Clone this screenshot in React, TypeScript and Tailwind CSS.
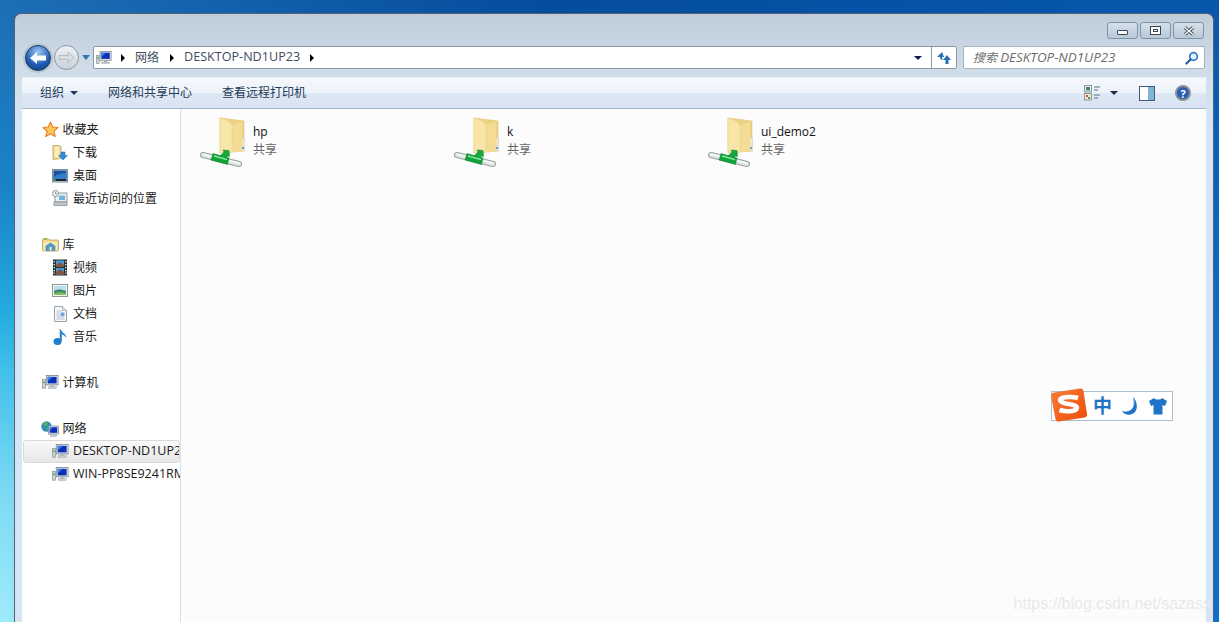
import React from 'react';

const Monitor = ({ size = 18 }: { size?: number }) => (
  <svg width={size} height={size} viewBox="0 0 18 16">
    <rect x="0.5" y="5" width="3" height="9" fill="#cfd6d6" stroke="#7d8a8a" strokeWidth="0.7" />
    <rect x="1" y="7" width="2" height="1.5" fill="#3fae4a" />
    <rect x="4.5" y="0.5" width="12.5" height="10" fill="#e6ebee" stroke="#6f7d8a" strokeWidth="0.8" />
    <rect x="6" y="2" width="9.5" height="7" fill="#0b2fb5" />
    <path d="M6 2h5.5l-5.500 5z" fill="#3a7fe6" />
    <rect x="9" y="11" width="3.500" height="1.500" fill="#a5acb0" />
    <rect x="6.500" y="12.500" width="8.500" height="1.800" fill="#c9cfd2" stroke="#8c969b" strokeWidth="0.4" />
  </svg>
);

const Star = () => (
  <svg width="17" height="17" viewBox="0 0 17 17">
    <path d="M8.500 1l2.200 5 5.300.5-4 3.600 1.200 5.400-4.700-2.800-4.700 2.800 1.200-5.400-4-3.600 5.300-.5z" fill="#fcc75a" stroke="#ea7d25" strokeWidth="1.100" strokeLinejoin="round" />
  </svg>
);

const Downloads = () => (
  <svg width="16" height="17" viewBox="0 0 16 17">
    <path d="M1 1.500h5l3 1v12l-8 1z" fill="#f3dd97" stroke="#b9a260" strokeWidth="0.8" />
    <path d="M3 3h4v10H3z" fill="#fbeebc" />
    <path d="M9 8h4v3.500h2.500L11 16l-4.500-4.500H9z" fill="#2f8fdc" stroke="#1c66ad" strokeWidth="0.5" />
  </svg>
);

const Desktop = () => (
  <svg width="16" height="14" viewBox="0 0 16 14">
    <rect x="0.500" y="0.500" width="15" height="12.500" fill="#c9d5e3" stroke="#7b8da3" />
    <rect x="1.500" y="1.500" width="13" height="8.500" fill="#1b4f9c" />
    <path d="M1.500 8c4-3 8-4 13-4v6h-13z" fill="#2f7ec6" />
    <rect x="1.500" y="10" width="13" height="2" fill="#22262c" />
    <rect x="2" y="10.400" width="2" height="1.200" fill="#58b24c" />
  </svg>
);

const Recent = () => (
  <svg width="16" height="17" viewBox="0 0 16 17">
    <rect x="3" y="3" width="12" height="9" fill="#eef1f3" stroke="#8f9aa1" />
    <rect x="7" y="5.500" width="6" height="4.500" fill="#6fb3df" />
    <circle cx="3.500" cy="3.500" r="3" fill="#f3f4f5" stroke="#8b9499" />
    <path d="M3.500 1.800v1.900h1.500" stroke="#596268" strokeWidth="0.7" fill="none" />
    <rect x="2" y="12" width="13" height="3.500" fill="#bfc6ca" stroke="#80898e" strokeWidth="0.7" />
  </svg>
);

const Library = () => (
  <svg width="17" height="15" viewBox="0 0 17 15">
    <path d="M0.500 2.500a1 1 0 011-1h4l1.500 1.500h8.500a1 1 0 011 1v9a1 1 0 01-1 1h-14a1 1 0 01-1-1z" fill="#f2d98e" stroke="#b79d5d" strokeWidth="0.8" />
    <rect x="2" y="2" width="3" height="1" fill="#6cc04a" />
    <path d="M1.500 5h14v8.500h-14z" fill="#f8e8b2" />
    <path d="M4 9l4.500-3L13 9v4.500H4z" fill="#4f9cc9" stroke="#2f719d" strokeWidth="0.5" />
    <rect x="7.500" y="10" width="2" height="3.500" fill="#f8e8b2" />
  </svg>
);

const Video = () => (
  <svg width="14" height="17" viewBox="0 0 14 17">
    <rect width="14" height="16" y="0.500" fill="#24312f" />
    {[2, 5, 8, 11, 13.500].map((y) => (
      <g key={y}>
        <rect x="0.600" y={y} width="1.400" height="1.400" fill="#cfe3e3" />
        <rect x="12" y={y} width="1.400" height="1.400" fill="#cfe3e3" />
      </g>
    ))}
    <rect x="3" y="1.500" width="8" height="6.500" fill="#3f9de0" />
    <rect x="3" y="9" width="8" height="6.500" fill="#3f9de0" />
    <path d="M3 6l4-3 4 3v2H3zM3 13l4-3 4 3v2.500H3z" fill="#87563f" />
  </svg>
);

const Picture = () => (
  <svg width="16" height="13" viewBox="0 0 16 13">
    <rect x="0.500" y="0.500" width="15" height="12" fill="#f4f5f5" stroke="#8e9497" />
    <rect x="2" y="2" width="12" height="9" fill="#b9dff0" />
    <path d="M2 7c3-2 7-2 12 0v4H2z" fill="#3f8a6a" />
    <path d="M2 9c4-1 8-1 12 0v2H2z" fill="#7dbb5c" />
  </svg>
);

const Doc = () => (
  <svg width="13" height="16" viewBox="0 0 13 16">
    <path d="M0.500 0.500h8l4 4v11h-12z" fill="#f7f8fa" stroke="#9aa0a6" />
    <path d="M8.500 0.500v4h4" fill="#dfe4e8" stroke="#9aa0a6" strokeWidth="0.7" />
    <path d="M2.500 5h5M2.500 7h3M2.500 9h3M2.500 11h8M2.500 13h8" stroke="#9fb0c4" strokeWidth="0.8" />
    <rect x="6.500" y="6.500" width="4" height="3.500" fill="#6fa6d6" />
  </svg>
);

const Music = () => (
  <svg width="14" height="18" viewBox="0 0 14 18">
    <ellipse cx="4.500" cy="13.500" rx="4" ry="3.500" fill="#1f7fd0" />
    <path d="M7 13V1c1 3 5 4 6 8-1.500-2-3-2.500-4.500-3V13z" fill="#2a8fdc" stroke="#1d6cb0" strokeWidth="0.5" />
  </svg>
);

const Globe = () => (
  <svg width="18" height="16" viewBox="0 0 18 16">
    <circle cx="5.500" cy="5.500" r="5.200" fill="#2f8fb8" />
    <path d="M2 2.500c2-1.500 4-1.500 5-.5l-1 2.500-3 .5zM6 6l3 .5-1.500 3.500-1.500-1z" fill="#56b548" />
    <rect x="7.500" y="5" width="10" height="8" fill="#e6ebee" stroke="#6f7d8a" strokeWidth="0.7" />
    <rect x="8.700" y="6.200" width="7.600" height="5.600" fill="#0b2fb5" />
    <path d="M8.700 6.200h4l-4 3.500z" fill="#3a7fe6" />
    <rect x="9.500" y="13.500" width="6" height="2" fill="#c9cfd2" stroke="#8c969b" strokeWidth="0.4" />
  </svg>
);

// folder with the green share pipe, origin at about (199,115)
const ShareFolder = () => (
  <svg width="46" height="52" viewBox="0 0 46 52">
    <path d="M21 2l24 3v30l-24 2z" fill="#edd283" stroke="#dcc278" strokeWidth="0.6" />
    <path d="M43 22h2.500v13H43z" fill="#f5ecc9" stroke="#c9c7b4" strokeWidth="0.5" />
    <rect x="43.300" y="31" width="1.600" height="2" fill="#3f8fd0" />
    <path d="M33 9l10-3v29l-10 1z" fill="#f3dc94" />
    <path d="M21 2c5 1 10 4 12 7v27l-7 4-5-5z" fill="#f8e6a8" stroke="#e6cc80" strokeWidth="0.5" />
    <path d="M4 39l36 9" stroke="#98a39e" strokeWidth="6" strokeLinecap="round" />
    <path d="M4 39l36 9" stroke="#dde5e1" strokeWidth="4" strokeLinecap="round" />
    <path d="M4 38.300l36 9" stroke="#f7faf8" strokeWidth="1.500" strokeLinecap="round" />
    <path d="M14 37.500l16 4.500-1.500 6.500-16.500-4.500z" fill="#12a23a" stroke="#0c7a2b" strokeWidth="0.5" />
    <path d="M21 40l4-4-1-2 6 0.500 0.500 6-2-.5-2.500 3z" fill="#14a83d" stroke="#0c7a2b" strokeWidth="0.5" />
    <path d="M15 40l13 3.500" stroke="#7fe89a" strokeWidth="1.800" />
  </svg>
);

const SogouLogo = () => (
  <svg width="38" height="36" viewBox="0 0 38 36">
    <defs>
      <linearGradient id="sg" x1="0" y1="0" x2="1" y2="1">
        <stop offset="0" stopColor="#f5803a" />
        <stop offset="1" stopColor="#ef4a08" />
      </linearGradient>
    </defs>
    <path d="M4 5.500L30 1.500c2-.3 3 .5 3.500 2.500L37 27c.3 2-.5 3-2.500 3.500L9 34.500c-2 .3-3-.5-3.500-2.500L1 9c-.3-2 1-3.200 3-3.500z" fill="url(#sg)" />
    <path d="M28 11c-5-1.500-15-1.500-17.500 1-2 2 2 4 8 5s9.500 2 8 5c-2 2.500-11 3-17 1" fill="none" stroke="#fff" strokeWidth="4.500" />
  </svg>
);

const NavRow = ({ icon, label, indent = false, selected = false, latin = false }: { icon: React.ReactNode; label: string; indent?: boolean; selected?: boolean; latin?: boolean }) => (
  <div className={`flex items-center whitespace-nowrap overflow-hidden ${selected ? 'h-[23px] ml-px box-border border border-[#d9d9d9] rounded-[3px] bg-gradient-to-b from-[#fafafa] to-[#e6e6e6]' : 'h-[23px]'}`}>
    <div className={`flex items-center justify-center w-[20px] shrink-0 ${selected ? 'ml-[26px]' : indent ? 'ml-[28px]' : 'ml-[18px]'}`}>{icon}</div>
    <span className={`${indent ? 'ml-[3px]' : 'ml-[2.500px]'} ${latin ? 'text-[12.5px]' : 'text-[12px]'} text-[#1a1a1a]`}>{label}</span>
  </div>
);

const FileItem = ({ name }: { name: string }) => (
  <div className="w-[254px] flex items-start pl-[18px]">
    <ShareFolder />
    <div className="ml-[8px] pt-[7px]">
      <div className="text-[12px] leading-[18px] text-[#111]">{name}</div>
      <div className="text-[12px] leading-[18px] text-[#666]">共享</div>
    </div>
  </div>
);

const captionBtn = 'w-[31px] h-[17px] rounded-[3px] border border-[#7f93a8] bg-gradient-to-b from-[#d5e1ec] to-[#b8c8d8] flex items-center justify-center';

export default function App() {
  return (
    <div
      className="w-[1219px] h-[622px] overflow-hidden bg-[linear-gradient(to_bottom,rgba(0,30,90,0.3),transparent_60%),linear-gradient(to_right,transparent_0%,#0660bb_45%,#0a70d0_100%),linear-gradient(to_bottom,#2a90dc_0%,#1f95dc_30%,#26b4e6_50%,#7fdcf5_80%,#a0ecfb_100%)] pt-[13px] pl-[14px]"
      style={{ fontFamily: '"Open Sans", "Noto Sans CJK SC", sans-serif' }}
    >
      <div className="w-[1200px] h-[609px] rounded-t-[7px] border border-b-0 border-[#55616e] bg-[linear-gradient(to_bottom,#bfcddb_0px,#d3e0ec_70px,#d6e5f3_110px,#d6e5f3_100%)] flex flex-col">
        <div className="h-[28px] flex justify-end items-start pt-[8px] pr-[9px] gap-[2px] shrink-0">
          <div className={captionBtn}>
            <div className="w-[11px] h-[5px] mt-[4px] border border-[#3c4652] bg-white rounded-[1px]" />
          </div>
          <div className={captionBtn}>
            <div className="w-[11px] h-[9px] border border-[#3c4652] bg-white flex items-center justify-center">
              <div className="w-[5px] h-[3px] border border-[#3c4652]" />
            </div>
          </div>
          <div className={captionBtn}>
            <svg width="12" height="10" viewBox="0 0 12 10">
              <path d="M2 1.500l8 7M10 1.500l-8 7" stroke="#3c4652" strokeWidth="3" />
              <path d="M2 1.500l8 7M10 1.500l-8 7" stroke="#fff" strokeWidth="1.400" />
            </svg>
          </div>
        </div>

        <div className="h-[31px] flex items-center pl-[10px] shrink-0">
          <div className="w-[68px] h-[27px] flex items-center">
            <div className="w-[26px] h-[26px] rounded-full border border-[#16355c] shadow-[0_0_0_2px_#b9c5d0] bg-[radial-gradient(circle_at_50%_25%,#9cc6f2,#1f5bb0_60%,#0d3a80)] flex items-center justify-center">
              <svg width="18" height="14" viewBox="0 0 18 14">
                <path d="M1 7l7-6v3.500h9v5H8V13z" fill="#fff" />
              </svg>
            </div>
            <div className="w-[25px] h-[25px] rounded-full border border-[#8d9aa6] bg-gradient-to-b from-[#eef2f5] to-[#c9d2da] flex items-center justify-center ml-[3px]">
              <svg width="17" height="13" viewBox="0 0 17 13">
                <path d="M16 6.500L10 1v3.500H1v4h9V12z" fill="#d7dee4" stroke="#a4afb8" strokeWidth="0.7" />
              </svg>
            </div>
            <div className="ml-[3px] w-0 h-0 border-x-[4px] border-x-transparent border-t-[5px] border-t-[#2f76b5]" />
          </div>
          <div className="w-[864px] h-[23px] rounded-[2px] border border-[#8a97a5] bg-white flex items-center text-[12px] text-[#3d4c5c]">
            <div className="ml-[2px]"><Monitor size={16} /></div>
            <div className="ml-[9px] w-0 h-0 border-y-[4px] border-y-transparent border-l-[4px] border-l-black" />
            <span className="ml-[10px]">网络</span>
            <div className="ml-[11px] w-0 h-0 border-y-[4px] border-y-transparent border-l-[4px] border-l-black" />
            <span className="ml-[10px] text-[12.6px]">DESKTOP-ND1UP23</span>
            <div className="ml-[10px] w-0 h-0 border-y-[4px] border-y-transparent border-l-[4px] border-l-black" />
            <div className="ml-auto mr-[9px] w-0 h-0 border-x-[4px] border-x-transparent border-t-[4px] border-t-[#0c1a4a]" />
            <div className="w-[25px] h-full border-l border-[#8a97a5] flex items-center justify-center">
              <svg width="16" height="14" viewBox="0 0 16 14">
                <path d="M6 1L1 6h3c0 2 1 3 3 3l-1-2V6h2z" fill="#2a6db5" />
                <path d="M11 4l-4 5h2.500v4h3V9H15z" fill="#2a6db5" />
              </svg>
            </div>
          </div>
          <div className="ml-[6px] w-[242px] h-[23px] rounded-[2px] border border-[#a5b2bf] bg-white flex items-center pl-[9px] pr-[5px] text-[12px] italic text-[#6d6d6d]">
            <span>搜索 <span className="text-[13.4px]">DESKTOP-ND1UP23</span></span>
            <svg className="ml-auto" width="14" height="14" viewBox="0 0 14 14">
              <circle cx="8.500" cy="5.500" r="3.800" fill="#e6f2fb" stroke="#2f7cc4" strokeWidth="1.700" />
              <path d="M5.500 8.500L1.500 12.500" stroke="#1d5aa0" strokeWidth="2.200" strokeLinecap="round" />
            </svg>
          </div>
        </div>

        <div className="flex-1 mx-[7px] mt-[4px] flex flex-col min-h-0 border-t border-[#e8eff7]">
          <div className="h-[31px] shrink-0 border-b border-[#a3b6cc] bg-[linear-gradient(to_bottom,#f6f9fd_0%,#ecf2f9_50%,#dde7f4_52%,#d9e4f2_100%)] flex items-center text-[12px] text-[#1e3959]">
            <span className="ml-[18px]">组织</span>
            <div className="ml-[6px] w-0 h-0 border-x-[4px] border-x-transparent border-t-[4px] border-t-[#1e3959]" />
            <span className="ml-[30px]">网络和共享中心</span>
            <span className="ml-[30px]">查看远程打印机</span>
            <div className="ml-auto flex items-center">
              <svg width="17" height="16" viewBox="0 0 17 16">
                <rect x="0.500" y="0.500" width="7" height="6.500" fill="#eaf2e8" stroke="#8b98a8" />
                <rect x="2" y="2" width="4" height="3.500" fill="#3f8a6a" />
                <rect x="0.500" y="8.500" width="7" height="6.500" fill="#f3e6c8" stroke="#8b98a8" />
                <rect x="2" y="10" width="2" height="2" fill="#d6503a" />
                <rect x="4" y="12" width="2" height="2" fill="#3f9a4a" />
                <path d="M10 2h6M10 5h4M10 10h6M10 13h4" stroke="#5a6f88" />
              </svg>
              <div className="ml-[9px] w-0 h-0 border-x-[4px] border-x-transparent border-t-[4px] border-t-[#16294a]" />
              <div className="ml-[21px] w-[16px] h-[15px] border border-[#3e5c7e] bg-white flex justify-end">
                <div className="w-[6px] h-full bg-[#7fb5d6]" />
              </div>
              <div className="ml-[20px] mr-[15px] w-[16px] h-[16px] rounded-full border-2 border-[#8b8f96] bg-[#2a5cb0] flex items-center justify-center text-[11px] leading-none font-bold text-white">?</div>
            </div>
          </div>

          <div className="flex-1 flex min-h-0 bg-[#fcfcfc]">
            <div className="w-[159px] shrink-0 border-r border-[#d5e3f1] pt-[9px] bg-white overflow-hidden">
              <NavRow icon={<Star />} label="收藏夹" />
              <NavRow indent icon={<Downloads />} label="下载" />
              <NavRow indent icon={<Desktop />} label="桌面" />
              <NavRow indent icon={<Recent />} label="最近访问的位置" />
              <div className="h-[23px]" />
              <NavRow icon={<Library />} label="库" />
              <NavRow indent icon={<Video />} label="视频" />
              <NavRow indent icon={<Picture />} label="图片" />
              <NavRow indent icon={<Doc />} label="文档" />
              <NavRow indent icon={<Music />} label="音乐" />
              <div className="h-[23px]" />
              <NavRow icon={<Monitor size={17} />} label="计算机" />
              <div className="h-[23px]" />
              <NavRow icon={<Globe />} label="网络" />
              <NavRow indent selected latin icon={<Monitor size={17} />} label="DESKTOP-ND1UP23" />
              <NavRow indent latin icon={<Monitor size={17} />} label="WIN-PP8SE9241RM" />
            </div>
            <div className="flex-1 relative pt-[7px] flex items-start">
              <FileItem name="hp" />
              <FileItem name="k" />
              <FileItem name="ui_demo2" />
              <div className="absolute left-[870px] top-[282px] w-[122px] h-[30px] border border-[#aebfd2] bg-white flex items-center pl-[41px] gap-[8px]">
                <span className="text-[19px] leading-none font-bold text-[#1f74c8]">中</span>
                <svg width="20" height="20" viewBox="0 0 20 20">
                  <path d="M13 1c3 5 1 12-4 14-3 1-5 1-7 0 2 4 8 5 12 2 4-3 4-11-1-16z" fill="#1f74c8" />
                  <path d="M13 1c3 5 1 12-4 14-3 1-5 1-7 0 3 1 15 2 11-14z" fill="#1f74c8" />
                </svg>
                <svg width="20" height="18" viewBox="0 0 20 18">
                  <path d="M6 1L1 4l2 5 2.500-1v9.500h9V8L17 9l2-5-5-3c-1 2-7 2-8 0z" fill="#1f74c8" />
                </svg>
              </div>
              <div className="absolute left-[869px] top-[278px]"><SogouLogo /></div>
              <div className="absolute -right-[5px] bottom-[10px] text-[16px] leading-none text-[#e9e9e9]" style={{ fontFamily: '"Liberation Sans", sans-serif' }}>https://blog.csdn.net/sazass</div>
            </div>
          </div>
        </div>
      </div>
    </div>
  );
}
